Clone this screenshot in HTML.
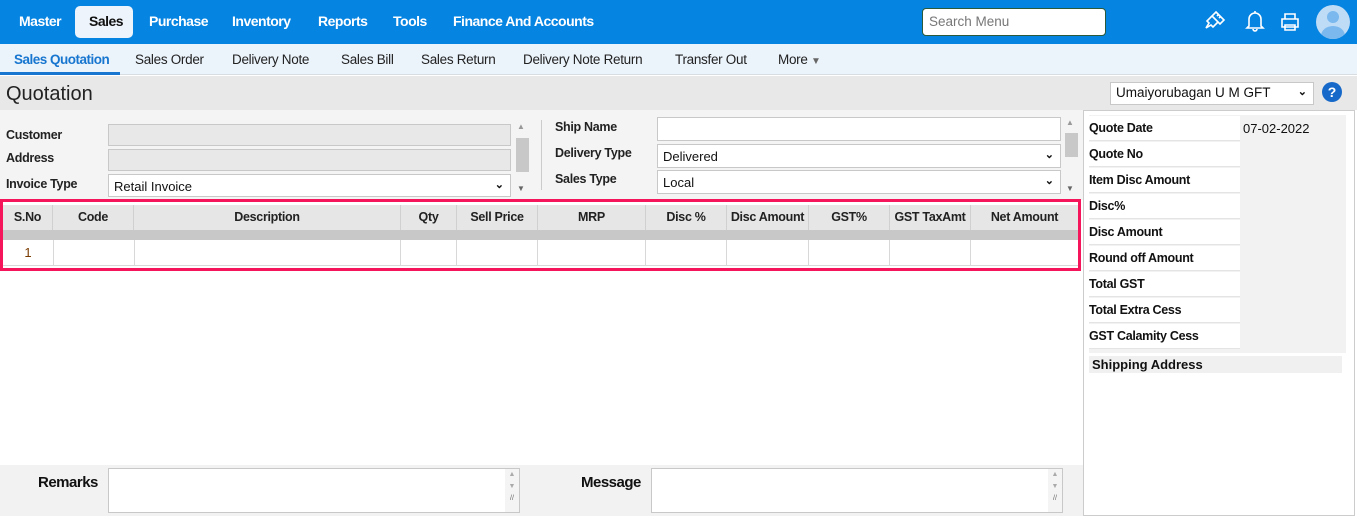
<!DOCTYPE html>
<html><head><meta charset="utf-8"><style>
*{box-sizing:border-box;margin:0;padding:0}
body{width:1357px;height:516px;overflow:hidden;font-family:"Liberation Sans",sans-serif;font-size:13px;color:#111;background:#fff;position:relative}
.a{position:absolute}
.top{left:0;top:0;width:1357px;height:44px;background:#0684e2}
.nav{top:13px;color:#fff;font-weight:bold;font-size:14px;letter-spacing:-0.5px}
.sub{left:0;top:44px;width:1357px;height:31px;background:#ebf3fb;border-bottom:1px solid #d8dde2}
.st{top:52px;font-size:13.5px;color:#222;letter-spacing:-0.3px}
.lbl{font-size:12.5px;font-weight:bold;color:#222;letter-spacing:-0.3px}
.inp{border:1px solid #c8c8c8;background:#fff}
.th{top:205px;height:25px;background:#e6e6e6;border-right:1px solid #d0d0d0;text-align:center;font-weight:bold;font-size:12.5px;line-height:25px;letter-spacing:-0.3px;color:#222}
.td{top:240px;height:25px;border-right:1px solid #d8d8d8;background:#fff}
.rr{left:1089px;width:251px;height:25px;background:#fff;border-bottom:1px solid #e4e4e4}
.rr span{position:absolute;left:0;top:5px;font-weight:bold;font-size:12.5px;letter-spacing:-0.3px}
.rr i{position:absolute;left:151px;top:0;width:100px;height:25px;background:#f2f2f2;font-style:normal;font-size:13px;padding:5px 3px}
.chev{position:absolute;right:6px;top:3px;font-size:11px;font-weight:bold}
.sb{position:absolute;right:0;top:0;width:14px;height:100%;background:#f4f4f4;font-size:7px;color:#aaa;text-align:center;line-height:12px}
</style></head><body>
<div class="a top"></div>
<div class="a nav" style="left:19px">Master</div>
<div class="a" style="left:75px;top:6px;width:58px;height:32px;background:#edf4fb;border-radius:5px"></div>
<div class="a nav" style="left:89px;color:#111">Sales</div>
<div class="a nav" style="left:149px">Purchase</div>
<div class="a nav" style="left:232px">Inventory</div>
<div class="a nav" style="left:318px">Reports</div>
<div class="a nav" style="left:393px">Tools</div>
<div class="a nav" style="left:453px">Finance And Accounts</div>
<div class="a" style="left:922px;top:8px;width:184px;height:28px;background:#fff;border:1px solid #2a5a3a;border-radius:4px;color:#777;font-size:13.5px;padding:5px 6px">Search Menu</div>
<svg class="a" style="left:1203px;top:9px" width="24" height="24" viewBox="0 0 24 24" fill="none" stroke="#fff" stroke-width="1.6"><path d="M13 3l8 8-4 4-8-8zM9 7l-5 5 2 2-3 5 5-3 2 2 5-5M16 5l-2 2M18 7l-2 2"/></svg>
<svg class="a" style="left:1245px;top:10px" width="20" height="22" viewBox="0 0 20 22" fill="none" stroke="#fff" stroke-width="1.6"><path d="M4 16V9a6 6 0 0112 0v7l2 2H2zM8 19a2 2 0 004 0M10 1v2"/></svg>
<svg class="a" style="left:1280px;top:12px" width="20" height="20" viewBox="0 0 20 20" fill="none" stroke="#fff" stroke-width="1.6"><path d="M5 7V2h10v5M2 7h16v8H2zM5 13h10v5H5z"/></svg>
<div class="a" style="left:1316px;top:5px;width:34px;height:34px;border-radius:50%;background:#bfdcf7;overflow:hidden"><div class="a" style="left:11px;top:6px;width:12px;height:12px;border-radius:50%;background:#7ab8ee"></div><div class="a" style="left:5px;top:21px;width:24px;height:20px;border-radius:50%;background:#7ab8ee"></div></div>

<div class="a sub"></div>
<div class="a st" style="left:14px;color:#1776cf;font-weight:bold;letter-spacing:-0.5px">Sales Quotation</div>
<div class="a" style="left:0;top:72px;width:120px;height:3px;background:#1776cf"></div>
<div class="a st" style="left:135px">Sales Order</div>
<div class="a st" style="left:232px">Delivery Note</div>
<div class="a st" style="left:341px">Sales Bill</div>
<div class="a st" style="left:421px">Sales Return</div>
<div class="a st" style="left:523px">Delivery Note Return</div>
<div class="a st" style="left:675px">Transfer Out</div>
<div class="a st" style="left:778px">More <span style="font-size:10px;color:#666">&#9660;</span></div>

<div class="a" style="left:0;top:76px;width:1357px;height:34px;background:#e8e8e8"></div>
<div class="a" style="left:6px;top:83px;font-size:20px;color:#222">Quotation</div>
<div class="a inp" style="left:1110px;top:82px;width:204px;height:23px;font-size:13.5px;padding:2px 5px">Umaiyorubagan U M GFT<span class="chev" style="top:2px">&#8964;</span></div>
<div class="a" style="left:1322px;top:82px;width:20px;height:20px;border-radius:50%;background:#1769c9;color:#fff;font-weight:bold;text-align:center;line-height:20px;font-size:14px">?</div>

<div class="a" style="left:0;top:110px;width:1083px;height:90px;background:#f4f4f4"></div>
<div class="a lbl" style="left:6px;top:128px">Customer</div>
<div class="a lbl" style="left:6px;top:151px">Address</div>
<div class="a lbl" style="left:6px;top:177px">Invoice Type</div>
<div class="a inp" style="left:108px;top:124px;width:403px;height:22px;background:#e8e8e8"></div>
<div class="a inp" style="left:108px;top:149px;width:403px;height:22px;background:#e8e8e8"></div>
<div class="a inp" style="left:108px;top:174px;width:403px;height:23px;font-size:13px;padding:4px 5px">Retail Invoice<span class="chev">&#8964;</span></div>
<div class="a" style="left:516px;top:138px;width:13px;height:34px;background:#c8c8c8"></div>
<div class="a" style="left:517px;top:122px;font-size:8px;color:#999">&#9650;</div>
<div class="a" style="left:517px;top:184px;font-size:8px;color:#666">&#9660;</div>
<div class="a" style="left:541px;top:120px;width:1px;height:70px;background:#ccc"></div>
<div class="a lbl" style="left:555px;top:120px">Ship Name</div>
<div class="a lbl" style="left:555px;top:146px">Delivery Type</div>
<div class="a lbl" style="left:555px;top:172px">Sales Type</div>
<div class="a inp" style="left:657px;top:117px;width:404px;height:24px"></div>
<div class="a inp" style="left:657px;top:144px;width:404px;height:24px;padding:4px 5px">Delivered<span class="chev">&#8964;</span></div>
<div class="a inp" style="left:657px;top:170px;width:404px;height:24px;padding:4px 5px">Local<span class="chev">&#8964;</span></div>
<div class="a" style="left:1065px;top:133px;width:13px;height:24px;background:#c8c8c8"></div>
<div class="a" style="left:1066px;top:118px;font-size:8px;color:#999">&#9650;</div>
<div class="a" style="left:1066px;top:184px;font-size:8px;color:#666">&#9660;</div>

<div class="a" style="left:0;top:199px;width:1081px;height:72px;border:3px solid #f5155b;background:#fff"></div>
<div class="a" style="left:3px;top:230px;width:1075px;height:10px;background:#c8c8c8"></div>
<div class="a th" style="left:3px;width:50px">S.No</div>
<div class="a th" style="left:53px;width:81px">Code</div>
<div class="a th" style="left:134px;width:267px">Description</div>
<div class="a th" style="left:401px;width:56px">Qty</div>
<div class="a th" style="left:457px;width:81px">Sell Price</div>
<div class="a th" style="left:538px;width:108px">MRP</div>
<div class="a th" style="left:646px;width:81px">Disc %</div>
<div class="a th" style="left:727px;width:82px">Disc Amount</div>
<div class="a th" style="left:809px;width:81px">GST%</div>
<div class="a th" style="left:890px;width:81px">GST TaxAmt</div>
<div class="a th" style="left:971px;width:107px;border-right:0">Net Amount</div>
<div class="a td" style="left:3px;width:51px;text-align:center;line-height:25px;color:#7a3b00">1</div>
<div class="a td" style="left:54px;width:81px"></div>
<div class="a td" style="left:135px;width:266px"></div>
<div class="a td" style="left:401px;width:56px"></div>
<div class="a td" style="left:457px;width:81px"></div>
<div class="a td" style="left:538px;width:108px"></div>
<div class="a td" style="left:646px;width:81px"></div>
<div class="a td" style="left:727px;width:82px"></div>
<div class="a td" style="left:809px;width:81px"></div>
<div class="a td" style="left:890px;width:81px"></div>
<div class="a" style="left:3px;top:265px;width:1075px;height:1px;background:#d8d8d8"></div>

<div class="a" style="left:0;top:465px;width:1083px;height:51px;background:#f2f2f2"></div>
<div class="a" style="left:38px;top:474px;font-size:15px;font-weight:bold;letter-spacing:-0.5px">Remarks</div>
<div class="a inp" style="left:108px;top:468px;width:412px;height:45px"><div class="sb">&#9650;<br>&#9660;<br><span style="color:#666">//</span></div></div>
<div class="a" style="left:581px;top:474px;font-size:15px;font-weight:bold;letter-spacing:-0.5px">Message</div>
<div class="a inp" style="left:651px;top:468px;width:412px;height:45px"><div class="sb">&#9650;<br>&#9660;<br><span style="color:#666">//</span></div></div>

<div class="a" style="left:1083px;top:110px;width:272px;height:406px;border:1px solid #ccc;background:#fff"></div>
<div class="a" style="left:1089px;top:115px;width:257px;height:238px;background:#f2f2f2"></div>
<div class="a rr" style="top:116px"><span>Quote Date</span><i>07-02-2022</i></div>
<div class="a rr" style="top:142px"><span>Quote No</span><i></i></div>
<div class="a rr" style="top:168px"><span>Item Disc Amount</span><i></i></div>
<div class="a rr" style="top:194px"><span>Disc%</span><i></i></div>
<div class="a rr" style="top:220px"><span>Disc Amount</span><i></i></div>
<div class="a rr" style="top:246px"><span>Round off Amount</span><i></i></div>
<div class="a rr" style="top:272px"><span>Total GST</span><i></i></div>
<div class="a rr" style="top:298px"><span>Total Extra Cess</span><i></i></div>
<div class="a rr" style="top:324px"><span>GST Calamity Cess</span><i></i></div>
<div class="a" style="left:1089px;top:356px;width:253px;height:17px;background:#f0f0f0;font-weight:bold;font-size:13px;padding:1px 3px">Shipping Address</div>
</body></html>
